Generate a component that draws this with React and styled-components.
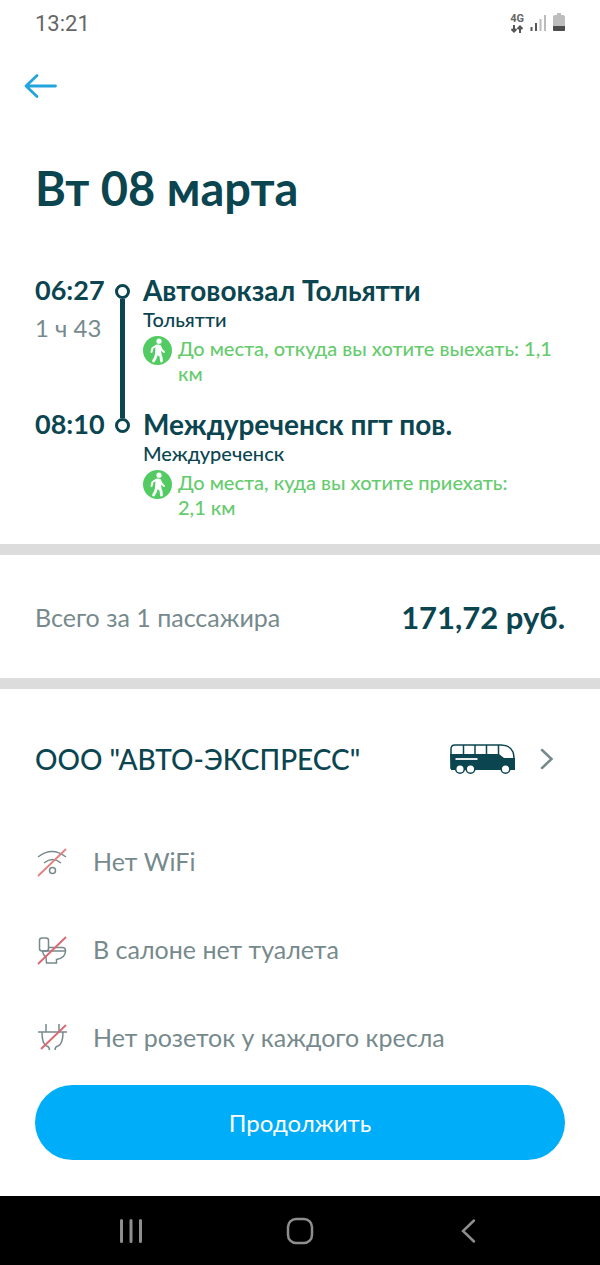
import React from "react"
import styled, { createGlobalStyle } from "styled-components"

const dark = "#0b4550"
const muted = "#768a8d"
const green = "#66cb6e"

const stops = [
  {
    time: "06:27",
    duration: "1 ч 43",
    name: "Автовокзал Тольятти",
    city: "Тольятти",
    walk: "До места, откуда вы хотите выехать: 1,1 км",
  },
  {
    time: "08:10",
    name: "Междуреченск пгт пов.",
    city: "Междуреченск",
    walk: "До места, куда вы хотите приехать: 2,1\u00a0км",
  },
]

const SignalIcons = () => (
  <svg width="35" height="20" viewBox="0 0 35 20" aria-hidden="true">
    <path d="M1.500 18v-4" stroke="#555" strokeWidth="2" />
    <path d="M6 18v-8" stroke="#555" strokeWidth="2" />
    <path d="M10.500 18V6" stroke="#bbb" strokeWidth="2" />
    <path d="M15 18V2" stroke="#bbb" strokeWidth="2" />
    <path d="M23 4q0-2 2-2h2V0h4v2h2q2 0 2 2v10H23z" fill="#bdbdbd" />
    <path d="M23 13h12v4q0 1-1 1H24q-1 0-1-1z" fill="#4d4d4d" />
  </svg>
)

const DataArrows = () => (
  <svg width="12" height="8" viewBox="0 0 12 8" fill="none" stroke="#555" strokeWidth="2" aria-hidden="true">
    <path d="M3 0v6M.5 4 3 6.500 5.500 4M9 8V2M6.500 4 9 1.500 11.500 4" />
  </svg>
)

const BackArrow = () => (
  <svg width="34" height="26" viewBox="0 0 34 26" fill="none" stroke="#22a5dd" strokeWidth="2.800" strokeLinecap="round" strokeLinejoin="round" aria-hidden="true">
    <path d="M31.500 13H2M13 2.500 2 13l11 10.500" />
  </svg>
)

const WalkIcon = () => (
  <svg width="29" height="29" viewBox="0 0 29 29" aria-hidden="true">
    <circle cx="14.500" cy="14.500" r="14.500" fill="#52cc62" />
    <circle cx="16" cy="5.200" r="2.600" fill="#fff" />
    <path d="M12.500 9.500q3-2 5 0l1 9-3 1.500-3.500-2z" fill="#fff" />
    <g fill="none" stroke="#fff" strokeLinecap="round" strokeLinejoin="round">
      <path d="M13.500 9.500 9.500 12 8.500 16M17 10l1.500 3.500 2.500 2.500" strokeWidth="2" />
      <path d="M13.500 17.500 12.500 21.500 10.500 25M16.500 17.500l1.500 3.500.5 4" strokeWidth="2.800" />
    </g>
  </svg>
)

const BusIcon = () => (
  <svg width="66" height="31" viewBox="0 0 66 31" aria-hidden="true">
    <path d="M1 11V5q0-4 4-4h46q9 0 12 7 1 3 1 7v9H1z" fill="#fff" stroke={dark} strokeWidth="1.500" />
    <path d="M13.500 1v9M25 1v9M36.500 1v9M48.500 1v9" stroke={dark} strokeWidth="1.500" />
    <path d="M0 10h49l5 4h11v12H1z" fill={dark} />
    <path d="M5.500 15h22" stroke="#fff" strokeWidth="1.800" />
    <g fill="#fff" stroke={dark} strokeWidth="1.500">
      <circle cx="10" cy="25" r="4.300" />
      <circle cx="20.500" cy="25" r="4.300" />
      <circle cx="55.500" cy="25" r="4.300" />
    </g>
  </svg>
)

const ChevronIcon = () => (
  <svg width="14" height="22" viewBox="0 0 14 22" fill="none" stroke={muted} strokeWidth="2.500" strokeLinecap="round" aria-hidden="true">
    <path d="M2 2l9.500 9L2 20" />
  </svg>
)

const NoWifiIcon = () => (
  <svg width="32" height="32" viewBox="0 0 32 32" fill="none" stroke={muted} strokeWidth="1.500" aria-hidden="true">
    <path d="M3 12q14-11 28 0M9 18q8.500-7 17 0" />
    <circle cx="17.500" cy="25.500" r="3" />
    <path d="M3 31 31 4" stroke="#e08080" strokeWidth="1.800" />
  </svg>
)

const NoToiletIcon = () => (
  <svg width="32" height="32" viewBox="0 0 32 32" fill="none" stroke={muted} strokeWidth="1.500" aria-hidden="true">
    <rect x="4.500" y="5" width="9" height="13" rx="2.500" />
    <path d="M13.500 14.500H28q2.500.5 2.500 3M7.500 18h23q0 7-9 8.500V30h-10l-.5-5.500q-3-2.500-3.500-6.500" />
    <path d="M3 31 31 4" stroke="#dc6670" strokeWidth="1.800" />
  </svg>
)

const NoSocketIcon = () => (
  <svg width="32" height="32" viewBox="0 0 32 32" fill="none" stroke={muted} strokeWidth="1.500" aria-hidden="true">
    <path d="M11 3v8M24 3v8M3 11h29M7 11q0 12 4.500 14 3 .5 3 4M28 11q0 12-5 14-3 .5-3 4" />
    <path d="M6 28 31 4" stroke="#dc6670" strokeWidth="1.800" />
  </svg>
)

const amenities = [
  { icon: <NoWifiIcon />, text: "Нет WiFi" },
  { icon: <NoToiletIcon />, text: "В салоне нет туалета" },
  { icon: <NoSocketIcon />, text: "Нет розеток у каждого кресла" },
]

const App = () => {
  return (
    <Page>
      <GlobalStyle />
      <StatusBar>
        <span>13:21</span>
        <StatusIcons>
          <Network>
            4G
            <DataArrows />
          </Network>
          <SignalIcons />
        </StatusIcons>
      </StatusBar>
      <Header>
        <IconButton aria-label="Назад">
          <BackArrow />
        </IconButton>
      </Header>
      <Main>
        <Title>Вт 08 марта</Title>
        <Trip>
          {stops.map((stop, i) => (
            <Stop key={stop.time}>
              <TimeColumn>
                <Time>{stop.time}</Time>
                {stop.duration && <Duration>{stop.duration}</Duration>}
              </TimeColumn>
              <Rail>
                <RailTop $visible={i > 0} />
                <RailDot />
                <RailLine $visible={i < stops.length - 1} />
              </Rail>
              <Place>
                <PlaceName>{stop.name}</PlaceName>
                <City>{stop.city}</City>
                <Walk>
                  <WalkIcon />
                  <span>{stop.walk}</span>
                </Walk>
              </Place>
            </Stop>
          ))}
        </Trip>
        <Price>
          <PriceLabel>Всего за 1 пассажира</PriceLabel>
          <PriceValue>171,72 руб.</PriceValue>
        </Price>
        <Carrier>
          <span>ООО "АВТО-ЭКСПРЕСС"</span>
          <CarrierIcons>
            <BusIcon />
            <ChevronIcon />
          </CarrierIcons>
        </Carrier>
        <Amenities>
          {amenities.map((item) => (
            <Amenity key={item.text}>
              {item.icon}
              {item.text}
            </Amenity>
          ))}
        </Amenities>
      </Main>
      <Footer>
        <ContinueButton>Продолжить</ContinueButton>
      </Footer>
      <NavBar>
        <IconButton aria-label="Недавние">
          <svg width="24" height="26" viewBox="0 0 24 26" stroke="#8e8e8e" strokeWidth="3" strokeLinecap="round">
            <path d="M2.500 2.500v21M12 2.500v21M21.500 2.500v21" />
          </svg>
        </IconButton>
        <IconButton aria-label="Домой">
          <svg width="28" height="28" viewBox="0 0 28 28" fill="none" stroke="#8e8e8e" strokeWidth="2.500">
            <rect x="2" y="2" width="24" height="24" rx="8" />
          </svg>
        </IconButton>
        <IconButton aria-label="Вернуться">
          <svg width="16" height="26" viewBox="0 0 16 26" fill="none" stroke="#8e8e8e" strokeWidth="2.500" strokeLinecap="round">
            <path d="M13 2.500 2 13l11 10.500" />
          </svg>
        </IconButton>
      </NavBar>
    </Page>
  )
}

const GlobalStyle = createGlobalStyle`
  * {
    box-sizing: border-box;
  }

  body {
    margin: 0;
    background: #fff;
  }

  button {
    font-family: inherit;
    cursor: pointer;
  }

  svg {
    display: block;
    flex-shrink: 0;
  }
`

const Page = styled.div`
  display: flex;
  flex-direction: column;
  min-height: 100vh;

  font-family: Lato, "Open Sans", sans-serif;
  color: ${dark};
`

const StatusBar = styled.div`
  display: flex;
  align-items: center;
  justify-content: space-between;
  height: 46px;
  padding: 0 35px;

  font-family: Roboto, sans-serif;
  font-size: 22px;
  color: #666;
`

const StatusIcons = styled.div`
  display: flex;
  align-items: center;
  gap: 6px;
`

const Network = styled.div`
  display: flex;
  flex-direction: column;
  align-items: center;
  gap: 1px;

  font-size: 11px;
  font-weight: 700;
  line-height: 10px;
`

const Header = styled.header`
  display: flex;
  align-items: center;
  height: 80px;
  padding: 0 24px;
`

const IconButton = styled.button`
  padding: 0;
  background: none;
  border: none;
`

const Main = styled.main`
  flex: 1;
`

const Title = styled.h1`
  margin: 0;
  padding: 38px 35px 62px;

  font-size: 47px;
  font-weight: 700;
  line-height: 48px;
`

const Trip = styled.section`
  padding: 0 35px 24px;
`

const Stop = styled.div`
  display: grid;
  grid-template-columns: 80px 15px 1fr;

  &:not(:last-child) > :last-child {
    padding-bottom: 22px;
  }
`

const TimeColumn = styled.div`
  display: flex;
  flex-direction: column;
  gap: 8px;
`

const Time = styled.span`
  font-size: 27px;
  font-weight: 700;
  line-height: 32px;
`

const Duration = styled.span`
  font-size: 24px;
  line-height: 28px;
  color: ${muted};
`

const Rail = styled.div`
  display: flex;
  flex-direction: column;
  align-items: center;
`

const RailLine = styled.div`
  flex: 1;
  width: 5px;
  background: ${({ $visible }) => ($visible ? dark : "transparent")};
`

const RailTop = styled(RailLine)`
  flex: none;
  height: 10px;
`

const RailDot = styled.div`
  width: 15px;
  height: 15px;
  border: 3px solid ${dark};
  border-radius: 50%;
`

const Place = styled.div`
  padding-left: 13px;
`

const PlaceName = styled.h2`
  margin: 0;

  font-size: 28px;
  font-weight: 700;
  line-height: 32px;
`

const City = styled.div`
  font-size: 20px;
  font-weight: 500;
  line-height: 26px;
`

const Walk = styled.div`
  display: flex;
  align-items: flex-start;
  gap: 6px;
  padding-top: 4px;

  font-size: 20px;
  font-weight: 500;
  line-height: 25px;
  color: ${green};
`

const Price = styled.section`
  display: flex;
  align-items: center;
  justify-content: space-between;
  height: 145px;
  padding: 0 35px;
  border-top: 11px solid #dcdcdc;
  border-bottom: 11px solid #dcdcdc;
`

const PriceLabel = styled.span`
  font-size: 25px;
  color: ${muted};
`

const PriceValue = styled.span`
  font-size: 31px;
  font-weight: 700;
`

const Carrier = styled.button`
  display: flex;
  align-items: center;
  justify-content: space-between;
  width: 100%;
  padding: 50px 46px 38px 35px;
  background: none;
  border: none;

  font-size: 28px;
  font-weight: 500;
  line-height: 40px;
  color: ${dark};
`

const CarrierIcons = styled.span`
  display: flex;
  align-items: center;
  gap: 24px;
`

const Amenities = styled.ul`
  margin: 0;
  padding: 0 35px;
  list-style: none;
`

const Amenity = styled.li`
  display: flex;
  align-items: center;
  gap: 26px;
  height: 88px;

  font-size: 25px;
  color: ${muted};
`

const Footer = styled.footer`
  padding: 3px 35px 36px;
`

const ContinueButton = styled.button`
  width: 100%;
  height: 75px;
  background: #00adf9;
  border: none;
  border-radius: 38px;

  font-size: 24px;
  color: #fff;
`

const NavBar = styled.nav`
  display: grid;
  grid-template-columns: repeat(3, 1fr);
  align-items: center;
  justify-items: center;
  height: 69px;
  padding: 0 47px;
  background: #000;
`

export default App
